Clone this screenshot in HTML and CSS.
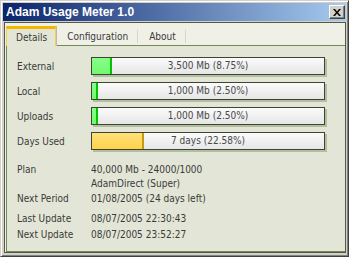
FILE: index.html
```
<!DOCTYPE html>
<html lang="en">
  <head>
    <meta charset="utf-8">
    <title>Adam Usage Meter 1.0</title>
    <link rel="stylesheet" href="styles.css">
  </head>
  <body>
    <div class="window">
      <div class="titlebar">
        <span class="title">Adam Usage Meter 1.0</span>
        <div class="close">
          <svg width="8" height="7" viewBox="0 0 8 7">
            <path d="M0 0h2l2 2.5 2-2.5h2l-3 3.5 3 3.5h-2l-2-2.5-2 2.5h-2l3-3.5z" fill="#000"/>
          </svg>
        </div>
      </div>

      <div class="client">
        <div class="tabs">
          <div class="tab active">Details</div>
          <div class="tab">Configuration</div>
          <div class="tab">About</div>
        </div>

        <div class="panel">
          <div class="meters">
            <div class="row">
              <span class="label">External</span>
              <div class="bar">
                <div class="fill green" style="width: 8.75%"></div>
                <span class="bar-text">3,500 Mb (8.75%)</span>
              </div>
            </div>
            <div class="row">
              <span class="label">Local</span>
              <div class="bar">
                <div class="fill green" style="width: 2.5%"></div>
                <span class="bar-text">1,000 Mb (2.50%)</span>
              </div>
            </div>
            <div class="row">
              <span class="label">Uploads</span>
              <div class="bar">
                <div class="fill green" style="width: 2.5%"></div>
                <span class="bar-text">1,000 Mb (2.50%)</span>
              </div>
            </div>
            <div class="row">
              <span class="label">Days Used</span>
              <div class="bar">
                <div class="fill yellow" style="width: 22.58%"></div>
                <span class="bar-text">7 days (22.58%)</span>
              </div>
            </div>
          </div>

          <div class="info">
            <div class="info-row">
              <span class="label">Plan</span>
              <span class="value">40,000 Mb - 24000/1000<br>AdamDirect (Super)</span>
            </div>
            <div class="info-row near">
              <span class="label">Next Period</span>
              <span class="value">01/08/2005 (24 days left)</span>
            </div>
            <div class="info-row far">
              <span class="label">Last Update</span>
              <span class="value">08/07/2005 22:30:43</span>
            </div>
            <div class="info-row close-by">
              <span class="label">Next Update</span>
              <span class="value">08/07/2005 23:52:27</span>
            </div>
          </div>
        </div>
      </div>
    </div>
  </body>
</html>
```

FILE: styles.css
```
  body {
    margin: 0;
    background: #d4d0c8;
  }

  .window {
    width: 349px;
    height: 257px;
    box-sizing: border-box;
    display: flex;
    flex-direction: column;
    padding: 2px;
    background: #d4d0c8;
    border: 1px solid;
    border-color: #d4d0c8 #404040 #404040 #d4d0c8;
    box-shadow: inset 1px 1px #ffffff, inset -1px -1px #808080;
  }

  .titlebar {
    height: 18px;
    display: flex;
    align-items: center;
    justify-content: space-between;
    padding: 0 1px 0 3px;
    background: linear-gradient(to right, #0a246a, #a6caf0);
  }

  .title {
    font-family: "Liberation Sans", sans-serif;
    font-size: 12px;
    font-weight: bold;
    color: #ffffff;
  }

  .close {
    width: 16px;
    height: 14px;
    box-sizing: border-box;
    display: flex;
    align-items: center;
    justify-content: center;
    background: #d4d0c8;
    border: 1px solid;
    border-color: #ffffff #404040 #404040 #ffffff;
    box-shadow: inset -1px -1px #808080;
  }

  .client {
    flex: 1;
    display: flex;
    flex-direction: column;
    margin: 1px 0 1px 1px;
    background: #f1f0e7;
    border: 1px solid #505a44;
    font-family: "DejaVu Sans Condensed", "Liberation Sans", sans-serif;
    font-size: 10px;
    color: #3a3a3a;
  }

  .tabs {
    height: 22px;
    display: flex;
    align-items: flex-end;
    padding-left: 1px;
  }

  .tab {
    height: 19px;
    box-sizing: border-box;
    padding: 3px 10px 0 11px;
    line-height: 16px;
    background: linear-gradient(#d6d6cc, #d6d6cc) right 4px / 1px 13px no-repeat;
  }

  .tab.active {
    position: relative;
    z-index: 1;
    height: 20px;
    line-height: 18px;
    padding: 0 8px 0 9px;
    margin-bottom: -1px;
    background: #e3e6d6;
    border-top: 3px solid #f2b800;
    border-left: 1px solid #f5cf55;
    border-right: 1px solid #f5cf55;
    box-shadow: 1px 0 #b8bca8;
  }

  .panel {
    flex: 1;
    margin-left: 1px;
    padding: 11px 10px 0;
    background: #e3e6d6;
    border: 1px solid #6f8c56;
    border-right: 0;
  }

  .meters {
    display: flex;
    flex-direction: column;
    gap: 7px;
  }

  .row {
    display: flex;
    align-items: center;
  }

  .label {
    width: 74px;
    flex: none;
  }

  .bar {
    position: relative;
    width: 234px;
    height: 18px;
    box-sizing: border-box;
    display: flex;
    background: linear-gradient(#fbfbfb, #e6e6e6);
    border: 1px solid #3c4434;
    box-shadow: 2px 2px 0 #b3bd9f;
  }

  .fill {
    box-sizing: border-box;
  }

  .green {
    background: linear-gradient(#86ff86, #72f872);
    border-right: 2px solid #00c400;
  }

  .yellow {
    background: linear-gradient(#ffe07a, #ffd24a);
    border-right: 2px solid #c99a10;
  }

  .bar-text {
    position: absolute;
    left: 0;
    right: 0;
    top: 0;
    line-height: 16px;
    text-align: center;
    color: #484848;
  }

  .info {
    margin-top: 13px;
    line-height: 14px;
  }

  .info-row {
    display: flex;
  }

  .near {
    margin-top: 1px;
  }

  .far {
    margin-top: 6px;
  }

  .close-by {
    margin-top: 2px;
  }
```
